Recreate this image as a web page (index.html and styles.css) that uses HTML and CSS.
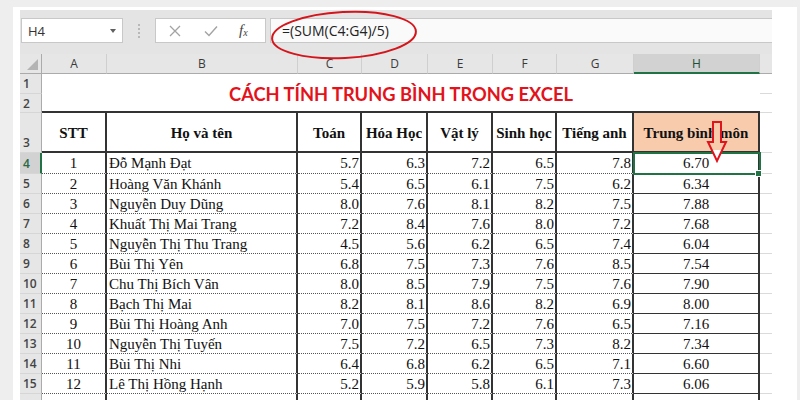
FILE: index.html
```html
<!DOCTYPE html>
<html lang="vi">
<head>
<meta charset="utf-8">
<link rel="stylesheet" href="styles.css">
</head>
<body>
<div class="window">
  <div class="toolbar">
    <div class="namebox"><span>H4</span><span class="caret"></span></div>
    <div class="sep"><span class="dots"></span></div>
    <div class="fxbox">
      <svg class="ico" width="12" height="12" viewBox="0 0 12 12"><path d="M1 1 L11 11 M11 1 L1 11" stroke="#a3a3a3" stroke-width="1.3" fill="none"/></svg>
      <svg class="ico" width="14" height="12" viewBox="0 0 14 12"><path d="M1 6.5 L5 10.5 L13 1.5" stroke="#a3a3a3" stroke-width="1.4" fill="none"/></svg>
      <span class="fx">f<sub>x</sub></span>
    </div>
    <div class="formula">=(SUM(C4:G4)/5)</div>
  </div>

  <div class="sheet">
    <!-- column headers -->
    <div class="ch corner"><span class="tri"></span></div>
    <div class="ch">A</div><div class="ch">B</div><div class="ch">C</div><div class="ch">D</div>
    <div class="ch">E</div><div class="ch">F</div><div class="ch">G</div><div class="ch ch-sel">H</div><div class="ch ch-gut"></div>

    <!-- rows 1-2 -->
    <div class="rh r1">1</div>
    <div class="title">CÁCH TÍNH TRUNG BÌNH TRONG EXCEL</div>
    <div class="gut r1g"></div>
    <div class="rh r2">2</div>
    <div class="gut r2g"></div>

    <!-- row 3 -->
    <div class="rh rh3">3</div>
    <div class="hd">STT</div>
    <div class="hd">Họ và tên</div>
    <div class="hd">Toán</div>
    <div class="hd">Hóa Học</div>
    <div class="hd">Vật lý</div>
    <div class="hd">Sinh học</div>
    <div class="hd">Tiếng anh</div>
    <div class="hd hd-avg">Trung bình môn</div>
    <div class="gut"></div>

    <div class="rh rh-sel">4</div><div class="c ctr">1</div><div class="c name">Đỗ Mạnh Đạt</div><div class="c num">5.7</div><div class="c num">6.3</div><div class="c num">7.2</div><div class="c num">6.5</div><div class="c num">7.8</div><div class="c avg sel">6.70</div><div class="gut"></div>
    <div class="rh">5</div><div class="c ctr">2</div><div class="c name">Hoàng Văn Khánh</div><div class="c num">5.4</div><div class="c num">6.5</div><div class="c num">6.1</div><div class="c num">7.5</div><div class="c num">6.2</div><div class="c avg">6.34</div><div class="gut"></div>
    <div class="rh">6</div><div class="c ctr">3</div><div class="c name">Nguyễn Duy Dũng</div><div class="c num">8.0</div><div class="c num">7.6</div><div class="c num">8.1</div><div class="c num">8.2</div><div class="c num">7.5</div><div class="c avg">7.88</div><div class="gut"></div>
    <div class="rh">7</div><div class="c ctr">4</div><div class="c name">Khuất Thị Mai Trang</div><div class="c num">7.2</div><div class="c num">8.4</div><div class="c num">7.6</div><div class="c num">8.0</div><div class="c num">7.2</div><div class="c avg">7.68</div><div class="gut"></div>
    <div class="rh">8</div><div class="c ctr">5</div><div class="c name">Nguyễn Thị Thu Trang</div><div class="c num">4.5</div><div class="c num">5.6</div><div class="c num">6.2</div><div class="c num">6.5</div><div class="c num">7.4</div><div class="c avg">6.04</div><div class="gut"></div>
    <div class="rh">9</div><div class="c ctr">6</div><div class="c name">Bùi Thị Yên</div><div class="c num">6.8</div><div class="c num">7.5</div><div class="c num">7.3</div><div class="c num">7.6</div><div class="c num">8.5</div><div class="c avg">7.54</div><div class="gut"></div>
    <div class="rh">10</div><div class="c ctr">7</div><div class="c name">Chu Thị Bích Vân</div><div class="c num">8.0</div><div class="c num">8.5</div><div class="c num">7.9</div><div class="c num">7.5</div><div class="c num">7.6</div><div class="c avg">7.90</div><div class="gut"></div>
    <div class="rh">11</div><div class="c ctr">8</div><div class="c name">Bạch Thị Mai</div><div class="c num">8.2</div><div class="c num">8.1</div><div class="c num">8.6</div><div class="c num">8.2</div><div class="c num">6.9</div><div class="c avg">8.00</div><div class="gut"></div>
    <div class="rh">12</div><div class="c ctr">9</div><div class="c name">Bùi Thị Hoàng Anh</div><div class="c num">7.0</div><div class="c num">7.5</div><div class="c num">7.2</div><div class="c num">7.6</div><div class="c num">6.5</div><div class="c avg">7.16</div><div class="gut"></div>
    <div class="rh">13</div><div class="c ctr">10</div><div class="c name">Nguyễn Thị Tuyến</div><div class="c num">7.5</div><div class="c num">7.2</div><div class="c num">6.5</div><div class="c num">7.3</div><div class="c num">8.2</div><div class="c avg">7.34</div><div class="gut"></div>
    <div class="rh">14</div><div class="c ctr">11</div><div class="c name">Bùi Thị Nhi</div><div class="c num">6.4</div><div class="c num">6.8</div><div class="c num">6.2</div><div class="c num">6.5</div><div class="c num">7.1</div><div class="c avg">6.60</div><div class="gut"></div>
    <div class="rh">15</div><div class="c ctr">12</div><div class="c name">Lê Thị Hồng Hạnh</div><div class="c num">5.2</div><div class="c num">5.9</div><div class="c num">5.8</div><div class="c num">6.1</div><div class="c num">7.3</div><div class="c avg">6.06</div><div class="gut"></div>
    <div class="rh"></div><div class="c ctr"></div><div class="c name"></div><div class="c num"></div><div class="c num"></div><div class="c num"></div><div class="c num"></div><div class="c num"></div><div class="c avg"></div><div class="gut"></div>
  </div>

  <svg class="ellipse" width="170" height="60" viewBox="0 0 170 60"><ellipse cx="85" cy="30" rx="72" ry="23" transform="rotate(-3 85 30)" fill="none" stroke="#d4161c" stroke-width="2"/></svg>
  <svg class="arrow" width="24" height="44" viewBox="0 0 24 44">
    <defs><linearGradient id="af" x1="0" y1="0" x2="0" y2="1"><stop offset="0.73" stop-color="#f8cbad"/><stop offset="0.73" stop-color="#ffffff"/></linearGradient></defs>
    <path d="M8 1 H16 V21 H21 L12 40 L3 21 H8 Z" fill="url(#af)" stroke="#e0141c" stroke-width="2" stroke-linejoin="miter"/>
  </svg>
</div>
</body>
</html>
```

FILE: styles.css
```css
html, body {
  margin: 0;
  padding: 0;
}
body {
  width: 800px;
  height: 400px;
  overflow: hidden;
  background: #eeeeee;
  font-family: "Open Sans", "Noto Sans", sans-serif;
}
.window {
  position: relative;
  margin: 7px 3px 0 13px;
  height: 393px;
  background: #ffffff;
  padding: 3px 0 0 7px;
  box-sizing: border-box;
  overflow: hidden;
}

/* formula bar */
.toolbar {
  width: 752px;
  height: 44px;
  background: #e4e4e4;
  box-sizing: border-box;
  padding: 8px 0 0 1px;
  display: flex;
  align-items: flex-start;
}
.namebox {
  width: 102px;
  height: 25px;
  box-sizing: border-box;
  border: 1px solid #c8c8c8;
  background: #ffffff;
  display: flex;
  align-items: center;
  justify-content: space-between;
  padding: 0 6px 0 6px;
  font-size: 13px;
  color: #333;
}
.caret {
  width: 0;
  height: 0;
  border-left: 3.5px solid transparent;
  border-right: 3.5px solid transparent;
  border-top: 4px solid #606060;
}
.sep {
  width: 32px;
  height: 25px;
  display: flex;
  justify-content: center;
  align-items: center;
}
.dots {
  width: 0;
  height: 14px;
  border-left: 2px dotted #b8b8b8;
}
.fxbox {
  width: 111px;
  height: 25px;
  box-sizing: border-box;
  border: 1px solid #c8c8c8;
  background: #ffffff;
  display: flex;
  align-items: center;
  padding-left: 13px;
}
.ico:first-child { margin-right: 23px; }
.ico + .ico { margin-right: 21px; }
.fx {
  font-family: "Liberation Serif", serif;
  font-style: italic;
  font-size: 15px;
  color: #444;
  line-height: 1;
}
.fx sub {
  font-size: 10px;
  vertical-align: -1px;
}
.formula {
  margin-left: 4px;
  flex: 1;
  height: 25px;
  box-sizing: border-box;
  border: 1px solid #c8c8c8;
  border-right: none;
  background: #fafafa;
  padding-left: 11px;
  font-size: 14px;
  line-height: 23px;
  color: #222;
}

/* sheet */
.sheet {
  display: grid;
  grid-template-columns: 22px 65px 191px 64px 66px 65px 64px 77px 126px 12px;
  grid-template-rows: 20px 20px 19px 40px 21px repeat(12, 20px) 20px;
  font-family: "Liberation Serif", "Times New Roman", serif;
  color: #111;
}
.ch {
  background: #e6e6e6;
  border-right: 1px solid #cfcfcf;
  border-bottom: 1px solid #ababab;
  box-sizing: border-box;
  display: flex;
  align-items: center;
  justify-content: center;
  font-family: "Open Sans", sans-serif;
  font-size: 12px;
  color: #3a3a3a;
}
.corner {
  position: relative;
  border-right: 1px solid #ababab;
}
.tri {
  position: absolute;
  right: 3px;
  bottom: 3px;
  width: 0;
  height: 0;
  border-left: 11px solid transparent;
  border-bottom: 11px solid #b4b4b4;
}
.ch-sel {
  background: #d2d2d2;
  border-bottom: 2px solid #217346;
  color: #1f4e33;
}
.ch-gut { border-right: none; }

.rh {
  background: #e6e6e6;
  border-right: 1px solid #ababab;
  border-bottom: 1px solid #d6d6d6;
  box-sizing: border-box;
  display: flex;
  align-items: center;
  padding-left: 3px;
  font-family: "Open Sans", sans-serif;
  font-size: 12px;
  font-weight: 600;
  color: #444;
}
.rh3 { align-items: flex-end; padding-bottom: 1px; }
.rh-sel {
  background: #d2d2d2;
  border-right: 2px solid #217346;
  color: #2b6a45;
}
.r1 { grid-row: 2; grid-column: 1; }
.r2 { grid-row: 3; grid-column: 1; }
.title {
  grid-row: 2 / 4;
  grid-column: 2 / 10;
  border-bottom: 2px solid #333;
  box-sizing: border-box;
  display: flex;
  align-items: center;
  justify-content: center;
  padding-top: 2px;
  font-family: "Lato", "Open Sans", sans-serif;
  font-weight: 700;
  font-size: 18.3px;
  color: #e3121b;
}
.gut {
  border-bottom: 1px solid #dadada;
  box-sizing: border-box;
}
.r1g { grid-row: 2; grid-column: 10; }
.r2g { grid-row: 3; grid-column: 10; }

.hd {
  border-right: 2px solid #333;
  border-bottom: 2px solid #333;
  box-sizing: border-box;
  display: flex;
  align-items: flex-end;
  justify-content: center;
  padding-bottom: 9px;
  font-weight: 700;
  font-size: 15px;
  white-space: nowrap;
}
.hd-avg { background: #f8cbad; }

.c {
  border-right: 2px solid #333;
  border-bottom: 1px dotted #555;
  box-sizing: border-box;
  display: flex;
  align-items: center;
  font-size: 15px;
  white-space: nowrap;
  padding-top: 1px;
}
.ctr { justify-content: center; }
.name { padding-left: 2px; }
.num { justify-content: flex-end; padding-right: 1px; }
.avg {
  justify-content: center;
  border-bottom: 1px solid #333;
}
.sel {
  position: relative;
  outline: 2px solid #217346;
  outline-offset: -1px;
}
.sel::after {
  content: "";
  position: absolute;
  right: -4px;
  bottom: -4px;
  width: 5px;
  height: 5px;
  background: #217346;
  border: 1px solid #fff;
}

/* overlays */
.ellipse {
  position: absolute;
  left: 246px;
  top: -2px;
}
.arrow {
  position: absolute;
  left: 692px;
  top: 114px;
}
```
